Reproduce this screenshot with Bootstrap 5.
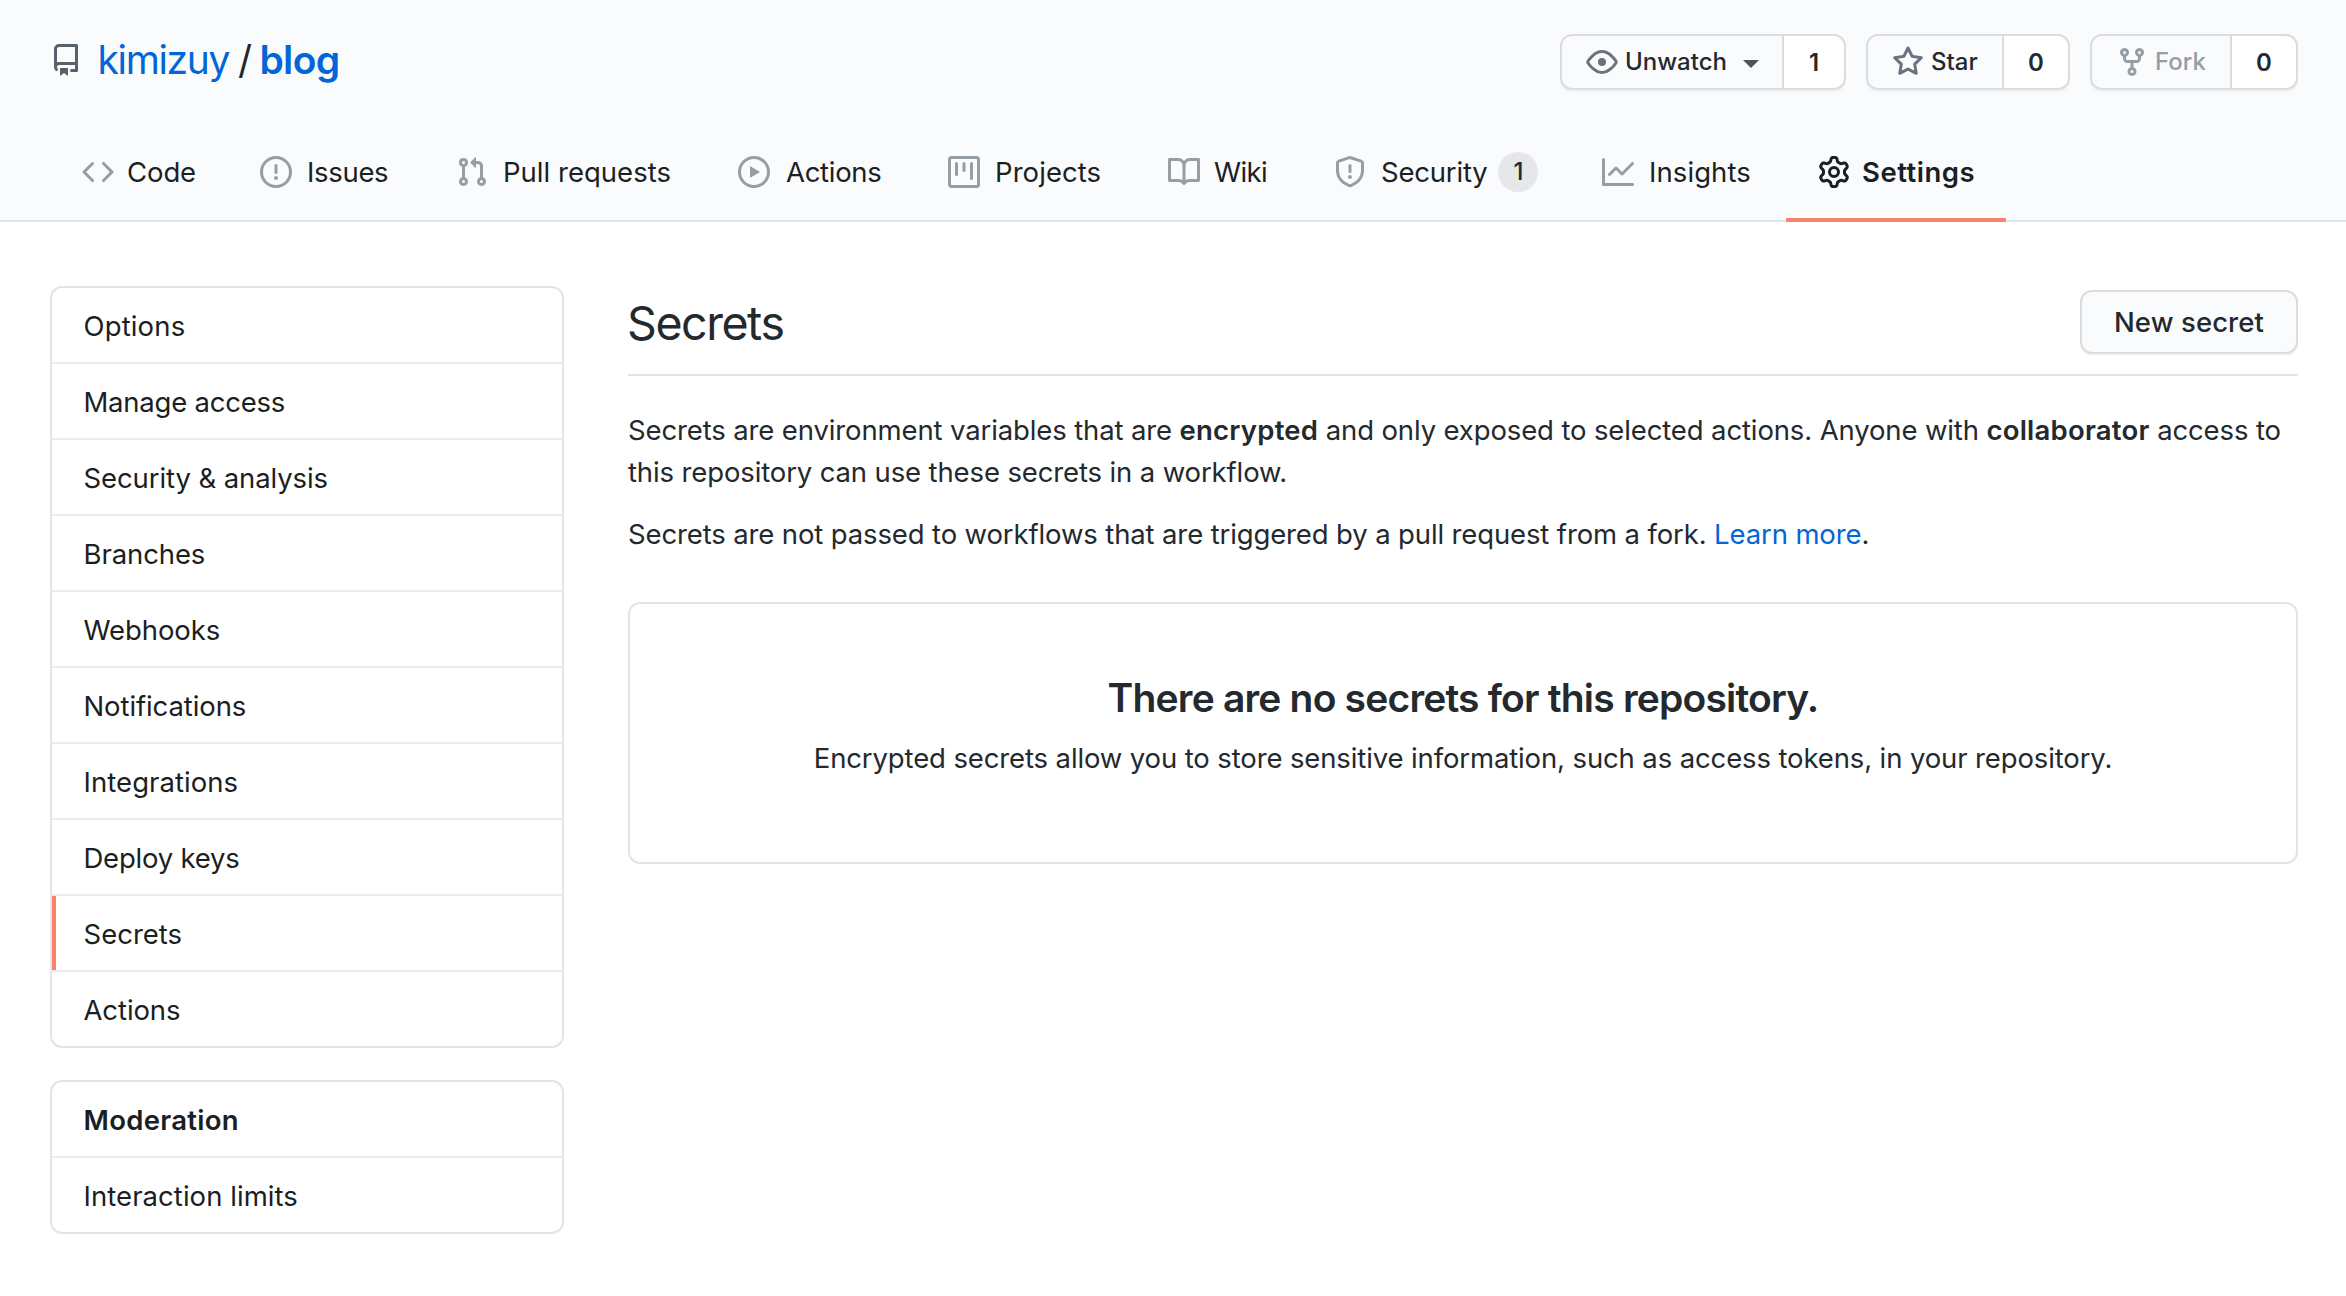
<!DOCTYPE html>
<html lang="en">
<head>
<meta charset="utf-8">
<meta name="viewport" content="width=device-width, initial-scale=1">
<title>Secrets · kimizuy/blog</title>
<link href="https://cdn.jsdelivr.net/npm/bootstrap@5.3.0/dist/css/bootstrap.min.css" rel="stylesheet">
<style>
  body { font-family: Inter, "Liberation Sans", sans-serif; font-size: 27.5px; line-height: 42px; letter-spacing: -.1px; color: #24292e; background: #fff; overflow: hidden; }
  a { color: #0366d6; text-decoration: none; }
  .octi { width: 32px; height: 32px; fill: currentColor; flex: none; display: block; }

  /* Repository header */
  .repo-head { height: 222px; background: #fafbfc; border-bottom: 2px solid #e1e4e8; }
  .repo-top { padding: 34px 48px 0 50px; height: 122px; }
  .repo-title { font-size: 39px; line-height: 52px; margin: 0; font-weight: 400; }
  .repo-title .octi { color: #586069; margin: 10px 15.5px 0 0; }
  .owner { letter-spacing: -1.36px; }
  .slash { margin: 0 7.5px 0 9px; }
  .repo-name { font-weight: 600; letter-spacing: -.66px; }

  .social { height: 56px; border-radius: 12px; box-shadow: 0 2px 0 rgba(27,31,35,.04); font-size: 24px; letter-spacing: 0; line-height: 50px; }
  .social .btn { --bs-btn-font-size: 24px; --bs-btn-font-weight: 500; --bs-btn-line-height: 50px; --bs-btn-padding-y: 0; --bs-btn-padding-x: 24px;
    --bs-btn-border-width: 2px; --bs-btn-border-color: #dadcde; --bs-btn-bg: #fafbfc; --bs-btn-color: #24292e; --bs-btn-border-radius: 12px;
    --bs-btn-disabled-bg: #fafbfc; --bs-btn-disabled-color: #959da5; --bs-btn-disabled-border-color: #dadcde; --bs-btn-disabled-opacity: 1;
    height: 56px; flex: none; }
  .social .btn .octi { color: #6a737d; margin-right: 7px; }
  .social .btn:disabled .octi { color: #959da5; }
  .social > .btn.tally:not(:first-child) { --bs-btn-bg: #fff; --bs-btn-font-weight: 600; --bs-btn-padding-x: 0; margin-left: -2px; padding-top: 1.5px; }
  .tri { border: 8px solid transparent; border-top-color: #4f5358; border-bottom: 0; margin: 4px 0 0 16px; }

  .repo-tabs { height: 100px; padding-left: 50px; }
  .repo-tabs .nav-link { height: 100px; padding: 0 0 0 32px; color: #1b1f23; flex: none; border: 0; border-radius: 0; }
  .repo-tabs .octi { color: #959da5; }
  .repo-tabs .active { font-weight: 600; border-bottom: 4px solid #f9826c; padding-top: 4px; }
  .repo-tabs .active .octi { color: #1b1f23; }
  .t-code { width: 178px; } .t-code span { margin-left: 13px; letter-spacing: -.1px; }
  .t-issues { width: 196px; } .t-issues span { margin-left: 15px; letter-spacing: -.32px; }
  .t-pulls { width: 282px; } .t-pulls span { margin-left: 15px; letter-spacing: .02px; }
  .t-actions { width: 210px; } .t-actions span { margin-left: 16px; letter-spacing: -.3px; }
  .t-projects { width: 220px; } .t-projects span { margin-left: 15px; letter-spacing: .07px; }
  .t-wiki { width: 166px; } .t-wiki span { margin-left: 14px; letter-spacing: -.6px; }
  .t-security { width: 268px; } .t-security .tab-text { margin-left: 15px; letter-spacing: -.2px; }
  .t-insights { width: 216px; } .t-insights span { margin-left: 15px; letter-spacing: .08px; }
  .t-settings { width: 220px; } .t-settings span { margin-left: 12px; letter-spacing: .5px; }
  .counter { width: 40px; height: 40px; background: #e6e7ea; color: #24292e; font-size: 24px; font-weight: 500; line-height: 40px; padding: 0; margin-left: 11px; }

  /* Page body */
  .page { padding: 64px 48px 0 50px; gap: 64px; }
  .side { width: 514px; flex: none; gap: 32px; }
  .side .list-group { --bs-list-group-border-width: 2px; --bs-list-group-border-color: #e1e4e8; --bs-list-group-border-radius: 12px; --bs-list-group-color: #1b1f23;
    --bs-list-group-item-padding-x: 31.5px; --bs-list-group-item-padding-y: 0; --bs-list-group-bg: #fff; }
  .side .list-group-item { height: 76px; line-height: 74px; padding-top: 1px; border-bottom-color: #eaecef; }
  .side .list-group-item:first-child { height: 78px; padding-top: 1px; }
  .side .list-group-item:last-child { border-bottom-color: #e1e4e8; }
  .side .current { box-shadow: inset 4px 0 0 #f9826c; }
  .side .head { font-weight: 600; letter-spacing: .3px; }
  .ls-a { letter-spacing: .15px; } .ls-b { letter-spacing: -.23px; } .ls-c { letter-spacing: 0; } .ls-d { letter-spacing: .06px; }

  .subhead { height: 90px; border-bottom: 2px solid #e1e4e8; padding-top: 4px; }
  .subhead h2 { font-size: 46.5px; font-weight: 400; letter-spacing: -1.45px; line-height: 65px; margin: 1px 0 0 -1px; }
  .btn-secret { --bs-btn-font-size: 27.5px; --bs-btn-font-weight: 500; --bs-btn-line-height: 60px; --bs-btn-padding-y: 0; --bs-btn-padding-x: 0;
    --bs-btn-border-width: 2px; --bs-btn-border-color: #dadcde; --bs-btn-bg: #fafbfc; --bs-btn-color: #24292e; --bs-btn-border-radius: 12px;
    width: 218px; height: 64px; letter-spacing: .1px; box-shadow: 0 2px 0 rgba(27,31,35,.04); }
  .intro { padding-top: 33px; letter-spacing: -.13px; }
  .intro p { margin-bottom: 20px; }
  .intro strong { font-weight: 600; letter-spacing: .22px; }
  .blank { height: 262px; margin-top: 47px; border: 2px solid #e1e4e8; border-radius: 12px; padding-top: 64px; }
  .blank h3 { font-size: 39px; font-weight: 600; line-height: 60px; letter-spacing: -.81px; margin: 0 0 9px; }
  .blank p { letter-spacing: -.125px; margin: 0; }
</style>
<script src="https://cdn.jsdelivr.net/npm/bootstrap@5.3.0/dist/js/bootstrap.bundle.min.js"></script>
</head>
<body>
<header class="repo-head">
  <div class="repo-top d-flex justify-content-between align-items-start">
    <h1 class="repo-title d-flex align-items-start">
      <svg class="octi" viewBox="0 0 16 16"><path fill-rule="evenodd" d="M2 2.5A2.5 2.5 0 014.5 0h8.75a.75.75 0 01.75.75v12.5a.75.75 0 01-.75.75h-2.5a.75.75 0 110-1.5h1.75v-2h-8a1 1 0 00-.714 1.7.75.75 0 01-1.072 1.05A2.495 2.495 0 012 11.5v-9zm10.5-1V9h-8c-.356 0-.694.074-1 .208V2.5a1 1 0 011-1h8zM5 12.25v3.25a.25.25 0 00.4.2l1.45-1.087a.25.25 0 01.3 0L8.6 15.7a.25.25 0 00.4-.2v-3.25a.25.25 0 00-.25-.25h-3.5a.25.25 0 00-.25.25z"/></svg>
      <a class="owner" href="#">kimizuy</a><span class="slash">/</span><a class="repo-name" href="#">blog</a>
    </h1>
    <div class="d-flex">
      <div class="btn-group social" style="width:286px;margin-right:20px">
        <button class="btn d-flex align-items-center" type="button" style="width:224px">
          <svg class="octi" viewBox="0 0 16 16"><path fill-rule="evenodd" d="M1.679 7.932c.412-.621 1.242-1.75 2.366-2.717C5.175 4.242 6.527 3.5 8 3.5c1.473 0 2.824.742 3.955 1.715 1.124.967 1.954 2.096 2.366 2.717a.119.119 0 010 .136c-.412.621-1.242 1.75-2.366 2.717C10.825 11.758 9.473 12.5 8 12.5c-1.473 0-2.824-.742-3.955-1.715C2.92 9.818 2.09 8.69 1.679 8.068a.119.119 0 010-.136zM8 2c-1.981 0-3.67.992-4.933 2.078C1.797 5.169.88 6.423.43 7.1a1.619 1.619 0 000 1.798c.45.678 1.367 1.932 2.637 3.024C4.329 13.008 6.019 14 8 14c1.981 0 3.67-.992 4.933-2.078 1.27-1.091 2.187-2.345 2.637-3.023a1.619 1.619 0 000-1.798c-.45-.678-1.367-1.932-2.637-3.023C11.671 2.992 9.981 2 8 2zm0 8a2 2 0 100-4 2 2 0 000 4z"/></svg>
          <span>Unwatch</span><span class="tri"></span>
        </button>
        <a class="btn tally" href="#" style="width:64px">1</a>
      </div>
      <div class="btn-group social" style="width:204px;margin-right:20px">
        <button class="btn d-flex align-items-center" type="button" style="width:138px">
          <svg class="octi" viewBox="0 0 16 16"><path fill-rule="evenodd" d="M8 .25a.75.75 0 01.673.418l1.882 3.815 4.21.612a.75.75 0 01.416 1.279l-3.046 2.97.719 4.192a.75.75 0 01-1.088.791L8 12.347l-3.766 1.98a.75.75 0 01-1.088-.79l.72-4.194L.818 6.374a.75.75 0 01.416-1.28l4.21-.611L7.327.668A.75.75 0 018 .25zm0 2.445L6.615 5.5a.75.75 0 01-.564.41l-3.097.45 2.24 2.184a.75.75 0 01.216.664l-.528 3.084 2.769-1.456a.75.75 0 01.698 0l2.77 1.456-.53-3.084a.75.75 0 01.216-.664l2.24-2.183-3.096-.45a.75.75 0 01-.564-.41L8 2.694v.001z"/></svg>
          <span>Star</span>
        </button>
        <a class="btn tally" href="#" style="width:68px">0</a>
      </div>
      <div class="btn-group social" style="width:208px">
        <button class="btn d-flex align-items-center" type="button" disabled style="width:142px">
          <svg class="octi" viewBox="0 0 16 16"><path fill-rule="evenodd" d="M5 3.25a.75.75 0 11-1.5 0 .75.75 0 011.5 0zm0 2.122a2.25 2.25 0 10-1.5 0v.878A2.25 2.25 0 005.75 8.5h1.5v2.128a2.251 2.251 0 101.5 0V8.5h1.5a2.25 2.25 0 002.25-2.25v-.878a2.25 2.25 0 10-1.5 0v.878a.75.75 0 01-.75.75h-4.5A.75.75 0 015 6.25v-.878zm3.75 7.378a.75.75 0 11-1.5 0 .75.75 0 011.5 0zm3-8.75a.75.75 0 100-1.5.75.75 0 000 1.5z"/></svg>
          <span>Fork</span>
        </button>
        <a class="btn tally" href="#" style="width:68px">0</a>
      </div>
    </div>
  </div>
  <nav class="repo-tabs nav flex-nowrap">
    <a class="nav-link d-flex align-items-center t-code" href="#"><svg class="octi" viewBox="0 0 16 16"><path fill-rule="evenodd" d="M4.72 3.22a.75.75 0 011.06 1.06L2.06 8l3.72 3.72a.75.75 0 11-1.06 1.06L.47 8.53a.75.75 0 010-1.06l4.25-4.25zm6.56 0a.75.75 0 10-1.06 1.06L13.94 8l-3.72 3.72a.75.75 0 101.06 1.06l4.25-4.25a.75.75 0 000-1.06l-4.25-4.25z"/></svg><span>Code</span></a>
    <a class="nav-link d-flex align-items-center t-issues" href="#"><svg class="octi" viewBox="0 0 16 16"><path fill-rule="evenodd" d="M8 1.5a6.5 6.5 0 100 13 6.5 6.5 0 000-13zM0 8a8 8 0 1116 0A8 8 0 010 8zm9 3a1 1 0 11-2 0 1 1 0 012 0zm-.25-6.25a.75.75 0 00-1.5 0v3.5a.75.75 0 001.5 0v-3.5z"/></svg><span>Issues</span></a>
    <a class="nav-link d-flex align-items-center t-pulls" href="#"><svg class="octi" viewBox="0 0 16 16"><path fill-rule="evenodd" d="M7.177 3.073L9.573.677A.25.25 0 0110 .854v4.792a.25.25 0 01-.427.177L7.177 3.427a.25.25 0 010-.354zM3.75 2.5a.75.75 0 100 1.5.75.75 0 000-1.5zm-2.25.75a2.25 2.25 0 113 2.122v5.256a2.251 2.251 0 11-1.5 0V5.372A2.25 2.25 0 011.5 3.25zM11 2.5h-1V4h1a1 1 0 011 1v5.628a2.251 2.251 0 101.5 0V5A2.5 2.5 0 0011 2.5zm1 10.25a.75.75 0 111.5 0 .75.75 0 01-1.5 0zM3.75 12a.75.75 0 100 1.5.75.75 0 000-1.5z"/></svg><span>Pull requests</span></a>
    <a class="nav-link d-flex align-items-center t-actions" href="#"><svg class="octi" viewBox="0 0 16 16"><path fill-rule="evenodd" d="M1.5 8a6.5 6.5 0 1113 0 6.5 6.5 0 01-13 0zM8 0a8 8 0 100 16A8 8 0 008 0zM6.379 5.227A.25.25 0 006 5.442v5.117a.25.25 0 00.379.214l4.264-2.559a.25.25 0 000-.428L6.379 5.227z"/></svg><span>Actions</span></a>
    <a class="nav-link d-flex align-items-center t-projects" href="#"><svg class="octi" viewBox="0 0 16 16"><path fill-rule="evenodd" d="M1.75 0A1.75 1.75 0 000 1.75v12.5C0 15.216.784 16 1.75 16h12.5A1.75 1.75 0 0016 14.25V1.75A1.75 1.75 0 0014.25 0H1.75zM1.5 1.75a.25.25 0 01.25-.25h12.5a.25.25 0 01.25.25v12.5a.25.25 0 01-.25.25H1.75a.25.25 0 01-.25-.25V1.75zM11.75 3a.75.75 0 00-.75.75v7.5a.75.75 0 001.5 0v-7.5a.75.75 0 00-.75-.75zm-8.25.75a.75.75 0 011.5 0v5.5a.75.75 0 01-1.5 0v-5.5zM8 3a.75.75 0 00-.75.75v3.5a.75.75 0 001.5 0v-3.5A.75.75 0 008 3z"/></svg><span>Projects</span></a>
    <a class="nav-link d-flex align-items-center t-wiki" href="#"><svg class="octi" viewBox="0 0 16 16"><path fill-rule="evenodd" d="M0 1.75A.75.75 0 01.75 1h4.253c1.227 0 2.317.59 3 1.501A3.744 3.744 0 0111.006 1h4.245a.75.75 0 01.75.75v10.5a.75.75 0 01-.75.75h-4.507a2.25 2.25 0 00-1.591.659l-.622.621a.75.75 0 01-1.06 0l-.622-.621A2.25 2.25 0 005.258 13H.75a.75.75 0 01-.75-.75V1.75zm8.755 3a2.25 2.25 0 012.25-2.25H14.5v9h-3.757c-.71 0-1.4.201-1.992.572l.004-7.322zm-1.504 7.324l.004-5.073-.002-2.253A2.25 2.25 0 005.003 2.5H1.5v9h3.757a3.75 3.75 0 011.994.574z"/></svg><span>Wiki</span></a>
    <a class="nav-link d-flex align-items-center t-security" href="#"><svg class="octi" viewBox="0 0 16 16"><path fill-rule="evenodd" d="M7.467.133a1.75 1.75 0 011.066 0l5.25 1.68A1.75 1.75 0 0115 3.48V7c0 1.566-.32 3.182-1.303 4.682-.983 1.498-2.585 2.813-5.032 3.855a1.7 1.7 0 01-1.33 0c-2.447-1.042-4.049-2.357-5.032-3.855C1.32 10.182 1 8.566 1 7V3.48a1.75 1.75 0 011.217-1.667l5.25-1.68zm.61 1.429a.25.25 0 00-.153 0l-5.25 1.68a.25.25 0 00-.174.238V7c0 1.358.275 2.666 1.057 3.86.784 1.194 2.121 2.34 4.366 3.297a.2.2 0 00.154 0c2.245-.956 3.582-2.104 4.366-3.298C13.225 9.666 13.5 8.36 13.5 7V3.48a.25.25 0 00-.174-.237l-5.25-1.68zM9 10.5a1 1 0 11-2 0 1 1 0 012 0zm-.25-5.75a.75.75 0 10-1.5 0v3a.75.75 0 001.5 0v-3z"/></svg><span class="tab-text">Security</span><span class="counter badge rounded-pill">1</span></a>
    <a class="nav-link d-flex align-items-center t-insights" href="#"><svg class="octi" viewBox="0 0 16 16"><path fill-rule="evenodd" d="M1.5 1.75a.75.75 0 00-1.5 0v12.5c0 .414.336.75.75.75h14.5a.75.75 0 000-1.5H1.5V1.75zm14.28 2.53a.75.75 0 00-1.06-1.06L10 7.94 7.53 5.47a.75.75 0 00-1.06 0L3.22 8.72a.75.75 0 001.06 1.06L7 7.06l2.47 2.47a.75.75 0 001.06 0l5.25-5.25z"/></svg><span>Insights</span></a>
    <a class="nav-link active d-flex align-items-center t-settings" href="#"><svg class="octi" viewBox="0 0 16 16"><path fill-rule="evenodd" d="M7.429 1.525a6.593 6.593 0 011.142 0c.036.003.108.036.137.146l.289 1.105c.147.56.55.967.997 1.189.174.086.341.183.501.29.417.278.97.423 1.53.27l1.102-.303c.11-.03.175.016.195.046.219.31.41.641.573.989.014.031.022.11-.059.19l-.815.806c-.411.406-.562.957-.53 1.456a4.588 4.588 0 010 .582c-.032.499.119 1.05.53 1.456l.815.806c.08.08.073.159.059.19a6.494 6.494 0 01-.573.99c-.02.029-.086.074-.195.045l-1.103-.303c-.559-.153-1.112-.008-1.529.27-.16.107-.327.204-.5.29-.449.222-.851.628-.998 1.189l-.289 1.105c-.029.11-.101.143-.137.146a6.613 6.613 0 01-1.142 0c-.036-.003-.108-.037-.137-.146l-.289-1.105c-.147-.56-.55-.967-.997-1.189a4.502 4.502 0 01-.501-.29c-.417-.278-.97-.423-1.53-.27l-1.102.303c-.11.03-.175-.016-.195-.046a6.492 6.492 0 01-.573-.989c-.014-.031-.022-.11.059-.19l.815-.806c.411-.406.562-.957.53-1.456a4.587 4.587 0 010-.582c.032-.499-.119-1.05-.53-1.456l-.815-.806c-.08-.08-.073-.159-.059-.19a6.44 6.44 0 01.573-.99c.02-.029.086-.075.195-.045l1.103.303c.559.153 1.112.008 1.529-.27.16-.107.327-.204.5-.29.449-.222.851-.628.998-1.189l.289-1.105c.029-.11.101-.143.137-.146zM8 0c-.236 0-.47.01-.701.03-.743.065-1.29.615-1.458 1.261l-.29 1.106c-.017.066-.078.158-.211.224a5.994 5.994 0 00-.668.386c-.123.082-.233.09-.3.071L3.27 2.776c-.644-.177-1.392.02-1.82.63a7.977 7.977 0 00-.704 1.217c-.315.675-.111 1.422.363 1.891l.815.806c.05.048.098.147.088.294a6.084 6.084 0 000 .772c.01.147-.038.246-.088.294l-.815.806c-.474.469-.678 1.216-.363 1.891.2.428.436.835.704 1.218.428.609 1.176.806 1.82.63l1.103-.303c.066-.019.176-.011.299.071.213.143.436.272.668.386.133.066.194.158.212.224l.289 1.106c.169.646.715 1.196 1.458 1.26a8.094 8.094 0 001.402 0c.743-.064 1.29-.614 1.458-1.26l.29-1.106c.017-.066.078-.158.211-.224a5.98 5.98 0 00.668-.386c.123-.082.233-.09.3-.071l1.102.302c.644.177 1.392-.02 1.82-.63.268-.382.505-.789.704-1.217.315-.675.111-1.422-.364-1.891l-.814-.806c-.05-.048-.098-.147-.088-.294a6.1 6.1 0 000-.772c-.01-.147.039-.246.088-.294l.814-.806c.475-.469.679-1.216.364-1.891a7.992 7.992 0 00-.704-1.218c-.428-.609-1.176-.806-1.82-.63l-1.103.303c-.066.019-.176.011-.299-.071a5.991 5.991 0 00-.668-.386c-.133-.066-.194-.158-.212-.224L10.16 1.29C9.99.645 9.444.095 8.701.031A8.094 8.094 0 008 0zm1.5 8a1.5 1.5 0 11-3 0 1.5 1.5 0 013 0zM11 8a3 3 0 11-6 0 3 3 0 016 0z"/></svg><span>Settings</span></a>
  </nav>
</header>

<div class="page d-flex align-items-start">
  <aside class="side d-flex flex-column">
    <div class="list-group">
      <a class="list-group-item ls-a" href="#">Options</a>
      <a class="list-group-item ls-b" href="#">Manage access</a>
      <a class="list-group-item" href="#">Security &amp; analysis</a>
      <a class="list-group-item" href="#">Branches</a>
      <a class="list-group-item" href="#">Webhooks</a>
      <a class="list-group-item" href="#">Notifications</a>
      <a class="list-group-item ls-d" href="#">Integrations</a>
      <a class="list-group-item ls-b" href="#">Deploy keys</a>
      <a class="list-group-item ls-c current" href="#">Secrets</a>
      <a class="list-group-item" href="#">Actions</a>
    </div>
    <div class="list-group">
      <div class="list-group-item head">Moderation</div>
      <a class="list-group-item ls-d" href="#">Interaction limits</a>
    </div>
  </aside>

  <main class="flex-grow-1">
    <div class="subhead d-flex justify-content-between align-items-start">
      <h2>Secrets</h2>
      <button class="btn btn-secret" type="button">New secret</button>
    </div>
    <div class="intro">
      <p>Secrets are environment variables that are <strong>encrypted</strong> and only exposed to selected actions. Anyone with <strong>collaborator</strong> access to<br>this repository can use these secrets in a workflow.</p>
      <p class="mb-0">Secrets are not passed to workflows that are triggered by a pull request from a fork. <a href="#">Learn more</a>.</p>
    </div>
    <div class="blank text-center">
      <h3>There are no secrets for this repository.</h3>
      <p>Encrypted secrets allow you to store sensitive information, such as access tokens, in your repository.</p>
    </div>
  </main>
</div>
</body>
</html>
